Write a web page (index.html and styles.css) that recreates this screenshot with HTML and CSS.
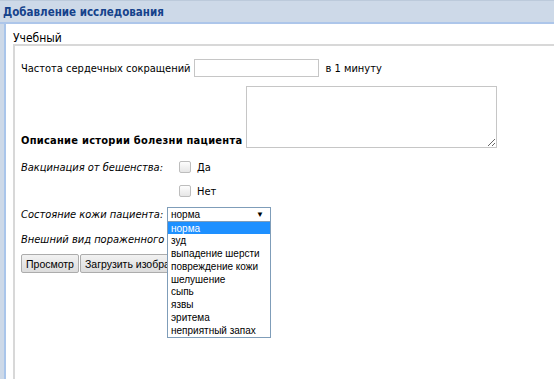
FILE: index.html
```html
<!DOCTYPE html>
<html lang="ru">
<head>
    <meta charset="UTF-8">
    <title>Добавление исследования</title>
    <link rel="stylesheet" href="styles.css">
</head>
<body>
    <div class="window">
        <div class="title-bar">Добавление исследования</div>
        <div class="window-body">
            <div class="tab-panel">
                <div class="tab-title">Учебный</div>
                <div class="tab-body">
                    <div class="row row-pulse">
                        <span>Частота сердечных сокращений</span>
                        <input type="text" class="pulse-input">
                        <span>в 1 минуту</span>
                    </div>
                    <div class="row row-history">
                        <b>Описание истории болезни пациента</b>
                        <textarea class="history-text"></textarea>
                    </div>
                    <div class="field field-first">
                        <span class="field-label">Вакцинация от бешенства:</span>
                        <label class="check"><input type="checkbox"> Да</label>
                    </div>
                    <div class="field">
                        <span class="field-label"></span>
                        <label class="check"><input type="checkbox"> Нет</label>
                    </div>
                    <div class="field field-skin">
                        <span class="field-label">Состояние кожи пациента:</span>
                        <div class="combo">
                            <div class="combo-value">норма<span class="combo-arrow">▼</span></div>
                            <ul class="combo-list">
                                <li class="selected">норма</li>
                                <li>зуд</li>
                                <li>выпадение шерсти</li>
                                <li>повреждение кожи</li>
                                <li>шелушение</li>
                                <li>сыпь</li>
                                <li>язвы</li>
                                <li>эритема</li>
                                <li>неприятный запах</li>
                            </ul>
                        </div>
                    </div>
                    <div class="field">
                        <span class="field-label">Внешний вид пораженного участка:</span>
                    </div>
                    <div class="buttons">
                        <button>Просмотр</button>
                        <button>Загрузить изображение</button>
                    </div>
                </div>
            </div>
        </div>
    </div>
</body>
</html>
```
FILE: styles.css
```css
body {
    margin: 0;
    font-family: "DejaVu Sans Condensed", "DejaVu Sans", Verdana, sans-serif;
    font-stretch: condensed;
    font-size: 11px;
    color: #000;
    background-color: #fff;
}

.window {
    height: 379px;
    display: flex;
    flex-direction: column;
    overflow: hidden;
}

.title-bar {
    height: 24px;
    line-height: 23px;
    padding-left: 3px;
    background-color: #cdd9e8;
    border-top: 1px solid #bccadb;
    border-bottom: 2px solid #adc6ea;
    box-sizing: border-box;
    color: #15428b;
    font-weight: bold;
    font-size: 11.5px;
}

.window-body {
    flex: 1;
    border-left: 4px solid #cdd9e8;
    display: flex;
}

.window-body::before {
    content: "";
    width: 2px;
    background-color: #a9c5ea;
}

.tab-panel {
    flex: 1;
    padding-left: 7px;
    display: flex;
    flex-direction: column;
}

.tab-title {
    height: 22px;
    line-height: 18px;
    padding-top: 5px;
    font-size: 12px;
    box-sizing: border-box;
    border-bottom: 2px solid #d8d8d8;
}

.tab-body {
    flex: 1;
    border-left: 2px solid #d8d8d8;
    padding: 13px 0 0 6px;
    font-size: 11px;
}

.row {
    display: flex;
    align-items: center;
}

.pulse-input {
    width: 125px;
    height: 18px;
    box-sizing: border-box;
    margin: 0 7px 0 3px;
    border: 1px solid #c6c6c6;
    padding: 0 2px;
}

.row-history {
    align-items: flex-end;
    margin-top: 9px;
}

.row-history b {
    margin-bottom: 1px;
    letter-spacing: 0.26px;
}

.history-text {
    width: 251px;
    height: 62px;
    box-sizing: border-box;
    margin-left: 4px;
    border: 1px solid #c6c6c6;
    resize: both;
}

.field {
    display: flex;
    align-items: center;
    height: 24px;
}

.field-first {
    margin-top: 7px;
}

.field-skin {
    margin-top: -1px;
    margin-bottom: 1px;
}

.field-label {
    width: 146px;
    flex: none;
    font-style: italic;
    white-space: nowrap;
}

.check {
    display: flex;
    align-items: center;
    margin-left: 7px;
}

.check input {
    appearance: none;
    width: 12px;
    height: 12px;
    margin: 0 6px 0 5px;
    border: 1px solid #bdbdbd;
    border-radius: 2px;
    background: linear-gradient(#fdfdfd, #e6e6e6);
}

.combo {
    position: relative;
    z-index: 2;
}

.combo-value {
    width: 104px;
    height: 15px;
    box-sizing: border-box;
    border: 1px solid #7f9db9;
    font-family: "Liberation Sans", Arial, sans-serif;
    font-size: 10px;
    line-height: 13px;
    padding-left: 3px;
    position: relative;
    background-color: #fff;
}

.combo-arrow {
    position: absolute;
    right: 6px;
    top: 0;
    font-size: 8px;
}

.combo-list {
    position: absolute;
    left: 0;
    top: 14px;
    width: 104px;
    box-sizing: border-box;
    margin: 0;
    padding: 0;
    list-style: none;
    background-color: #fff;
    border: 1px solid #7f9db9;
    font-family: "Liberation Sans", Arial, sans-serif;
    font-size: 10px;
}

.combo-list li {
    height: 12.8px;
    line-height: 13px;
    padding-left: 3px;
    white-space: nowrap;
}

.combo-list li.selected {
    background-color: #1e90ff;
    color: #fff;
}

.buttons {
    display: flex;
    gap: 1px;
    margin-top: 3px;
}

.buttons button {
    height: 19px;
    padding: 0 4px;
    font-family: "Liberation Sans", Arial, sans-serif;
    font-size: 10.5px;
    background: linear-gradient(#f2f2f2, #dcdcdc);
    border: 1px solid #acacac;
    border-radius: 2px;
    white-space: nowrap;
}
```
